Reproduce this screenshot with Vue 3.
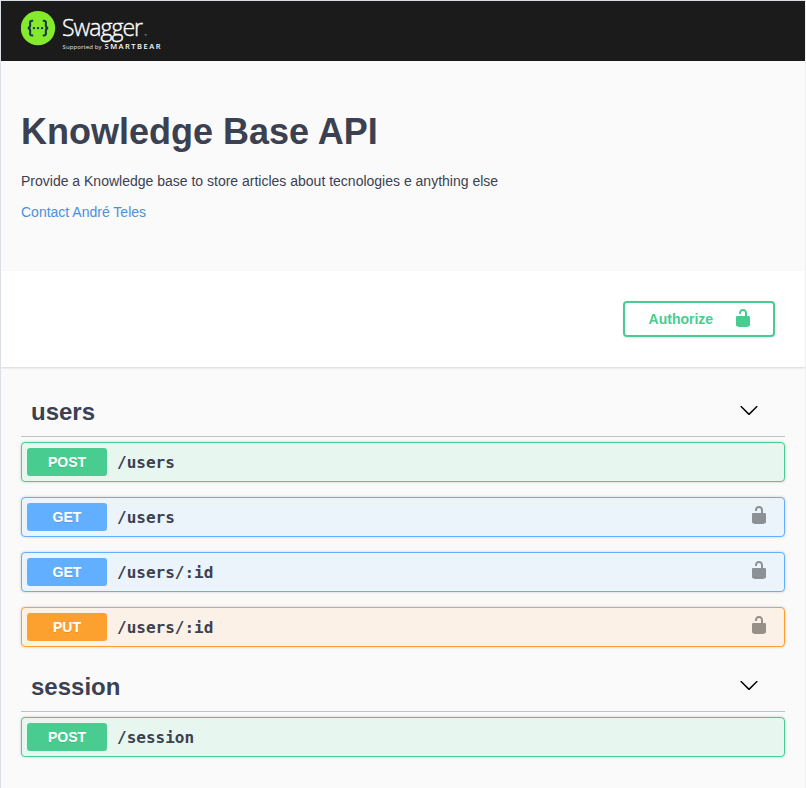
<script setup>
const unlock =
  'M15.8 8H14V5.6C14 2.703 12.665 1 10 1 7.334 1 6 2.703 6 5.6V6h2v-.801C8 3.754 8.797 3 10 3c1.203 0 2 .754 2 2.199V8H4c-.553 0-1 .646-1 1.199V17c0 .549.428 1.139.951 1.307l1.197.387C5.672 18.861 6.55 19 7.1 19h5.8c.549 0 1.428-.139 1.951-.307l1.196-.387c.524-.167.953-.757.953-1.306V9.199C17 8.646 16.352 8 15.8 8z'

const tags = [
  {
    name: 'users',
    operations: [
      { method: 'post', path: '/users', secured: false },
      { method: 'get', path: '/users', secured: true },
      { method: 'get', path: '/users/:id', secured: true },
      { method: 'put', path: '/users/:id', secured: true },
    ],
  },
  {
    name: 'session',
    operations: [{ method: 'post', path: '/session', secured: false }],
  },
]
</script>

<template>
  <div class="page">
    <header class="topbar">
      <svg class="logo" width="150" height="50" viewBox="0 0 150 50">
        <circle cx="17" cy="22.1" r="17.2" fill="#85ea2d" />
        <g fill="none" stroke="#173647" stroke-width="2.1">
          <path d="M12.2 14.7h-.9c-1.7 0-2.3.8-2.2 2.3l.1 2c0 1.9-.7 2.9-2.3 3.1 1.6.2 2.3 1.2 2.3 3.1l-.1 2c-.1 1.5.5 2.3 2.2 2.3h.9" />
          <path d="M21.8 14.7h.9c1.7 0 2.3.8 2.2 2.3l-.1 2c0 1.9.7 2.9 2.3 3.1-1.6.2-2.3 1.2-2.3 3.1l.1 2c.1 1.5-.5 2.3-2.2 2.3h-.9" />
        </g>
        <g fill="#173647">
          <circle cx="12.9" cy="22.1" r="1.2" />
          <circle cx="17" cy="22.1" r="1.2" />
          <circle cx="21.1" cy="22.1" r="1.2" />
        </g>
        <text class="word" x="41" y="29.6" textLength="81">Swagger</text>
        <rect x="123.5" y="28.5" width="2.5" height="0.8" fill="#999" />
        <text class="support" x="41.5" y="43" textLength="39">Supported by</text>
        <text class="bear" x="83.5" y="43" textLength="56">SMARTBEAR</text>
      </svg>
    </header>

    <section class="info">
      <h2>Knowledge Base API</h2>
      <p>Provide a Knowledge base to store articles about tecnologies e anything else</p>
      <a>Contact André Teles</a>
    </section>

    <section class="schemes">
      <button class="authorize">
        <span>Authorize</span>
        <svg width="20" height="20" viewBox="0 0 20 20"><path :d="unlock" /></svg>
      </button>
    </section>

    <main class="operations">
      <section v-for="tag in tags" :key="tag.name" class="tag">
        <h3>
          <span>{{ tag.name }}</span>
          <svg width="20" height="20" viewBox="0 0 20 20">
            <path d="M17.418 6.109c.272-.268.709-.268.979 0s.271.701 0 .969l-7.908 7.83c-.27.268-.707.268-.979 0l-7.908-7.83c-.27-.268-.27-.701 0-.969.271-.268.709-.268.979 0L10 13.25l7.418-7.141z" />
          </svg>
        </h3>
        <div class="list">
          <div v-for="op in tag.operations" :key="op.method + op.path" class="op" :class="op.method">
            <span class="method">{{ op.method.toUpperCase() }}</span>
            <span class="path">{{ op.path }}</span>
            <svg v-if="op.secured" class="lock" width="20" height="20" viewBox="0 0 20 20"><path :d="unlock" /></svg>
          </div>
        </div>
      </section>
    </main>
  </div>
</template>

<style>
body {
  background: #fafafa;
}
</style>

<style scoped>
.page {
  box-sizing: border-box;
  height: 788px;
  overflow: hidden;
  border: 1px solid #dadfe5;
  border-right-color: #efefef;
  border-bottom: 0;
  background: #fafafa;
  color: #3b4151;
  font-family: 'Liberation Sans', Arial, sans-serif;
}
.topbar {
  height: 60px;
  padding: 5px 20px;
  box-sizing: border-box;
  background: #1b1b1b;
}
.logo {
  display: block;
}
.logo text {
  fill: #fff;
  font-family: 'Open Sans', sans-serif;
}
.logo .word {
  font-size: 23px;
  font-weight: 300;
  stroke: #fff;
  stroke-width: 0.35px;
}
.logo .support {
  font-size: 6px;
  fill: #e4e4e4;
}
.logo .bear {
  font-size: 7.5px;
  font-weight: 600;
}
.info {
  height: 210px;
  box-sizing: border-box;
  padding: 50px 20px 0;
}
.info h2 {
  margin: 0;
  font-size: 36px;
  line-height: 41px;
}
.info p {
  margin: 21px 0 15px;
  font-size: 14px;
  line-height: 16px;
}
.info a {
  display: block;
  color: #4990e2;
  font-size: 14px;
  line-height: 16px;
}
.schemes {
  display: flex;
  justify-content: flex-end;
  padding: 30px;
  background: #fff;
  box-shadow: 0 1px 2px rgba(0, 0, 0, 0.15);
}
.authorize {
  display: flex;
  align-items: center;
  justify-content: space-between;
  box-sizing: border-box;
  width: 152px;
  height: 36px;
  padding: 0 20px 0 23.6px;
  border: 2px solid #49cc90;
  border-radius: 4px;
  background: transparent;
  box-shadow: 0 1px 2px rgba(0, 0, 0, 0.1);
  color: #49cc90;
  font: 700 14px 'Liberation Sans', Arial, sans-serif;
}
.authorize svg {
  margin-top: -2px;
  fill: #49cc90;
}
.operations {
  padding: 20px 20px 0;
}
.tag h3 {
  display: flex;
  align-items: center;
  justify-content: space-between;
  box-sizing: border-box;
  height: 50px;
  margin: 0 0 5px;
  padding: 0 26px 0 10px;
  border-bottom: 1px solid rgba(59, 65, 81, 0.3);
  font-size: 24px;
  line-height: 28px;
}
.tag h3 svg {
  margin-top: -3px;
}
.list {
  display: flex;
  flex-direction: column;
  gap: 15px;
  padding-bottom: 15px;
}
.op {
  display: flex;
  align-items: center;
  box-sizing: border-box;
  height: 40px;
  padding: 0 15px 0 5px;
  border: 1px solid;
  border-radius: 4px;
  box-shadow: 0 0 3px rgba(0, 0, 0, 0.19);
}
.method {
  width: 80px;
  height: 28px;
  border-radius: 3px;
  color: #fff;
  font-size: 14px;
  font-weight: 700;
  line-height: 28px;
  text-align: center;
  text-shadow: 0 1px 0 rgba(0, 0, 0, 0.1);
}
.path {
  padding: 1px 10px 0;
  font: 600 16px 'DejaVu Sans Mono', monospace;
}
.lock {
  margin: -4px 0 0 auto;
  opacity: 0.4;
}
.post {
  border-color: #49cc90;
  background: #e8f6f0;
}
.post .method {
  background: #49cc90;
}
.get {
  border-color: #61affe;
  background: #ebf3fb;
}
.get .method {
  background: #61affe;
}
.put {
  border-color: #fca130;
  background: #fbf1e6;
}
.put .method {
  background: #fca130;
}
</style>
